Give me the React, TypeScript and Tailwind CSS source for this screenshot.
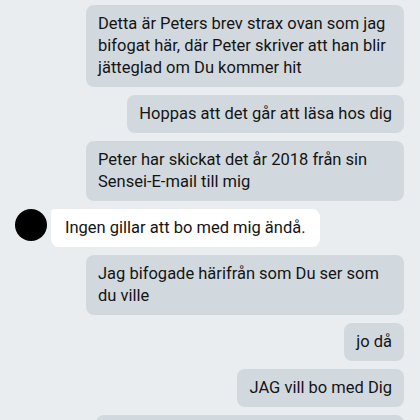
const FONT = { fontFamily: "Roboto, 'Noto Sans', sans-serif" }

const BUBBLE =
  "max-w-[318px] rounded-lg py-2 text-[16.5px] leading-[22px] text-[#141414]"

type Msg = { id: number; text: string; incoming?: boolean }

const MESSAGES: Msg[] = [
  { id: 1, text: "Detta är Peters brev strax ovan som jag bifogat här, där Peter skriver att han blir jätteglad om Du kommer hit" },
  { id: 2, text: "Hoppas att det går att läsa hos dig" },
  { id: 3, text: "Peter har skickat det år 2018 från sin Sensei-E-mail till mig" },
  { id: 4, text: "Ingen gillar att bo med mig ändå.", incoming: true },
  { id: 5, text: "Jag bifogade härifrån som Du ser som du ville" },
  { id: 6, text: "jo då" },
  { id: 7, text: "JAG vill bo med Dig" },
  { id: 8, text: "Jag har skickat brevet till dig igen i dag" },
]

export default function App() {
  return (
    <div
      className="h-[420px] w-[420px] overflow-hidden bg-[#e9edf0]"
      style={FONT}
    >
      <div className="flex flex-col gap-2 pt-[5px] pr-4 pl-[15px]">
        {MESSAGES.map((m) =>
          m.incoming ? (
            <div key={m.id} className="flex items-start gap-1">
              <div className="h-8 w-8 shrink-0 rounded-full bg-black" />
              <div className={`${BUBBLE} rounded-tl-sm bg-white px-[14px]`}>{m.text}</div>
            </div>
          ) : (
            <div key={m.id} className="flex justify-end">
              <div className={`${BUBBLE} bg-[#d1d9df] px-3`}>{m.text}</div>
            </div>
          )
        )}
      </div>
    </div>
  )
}
